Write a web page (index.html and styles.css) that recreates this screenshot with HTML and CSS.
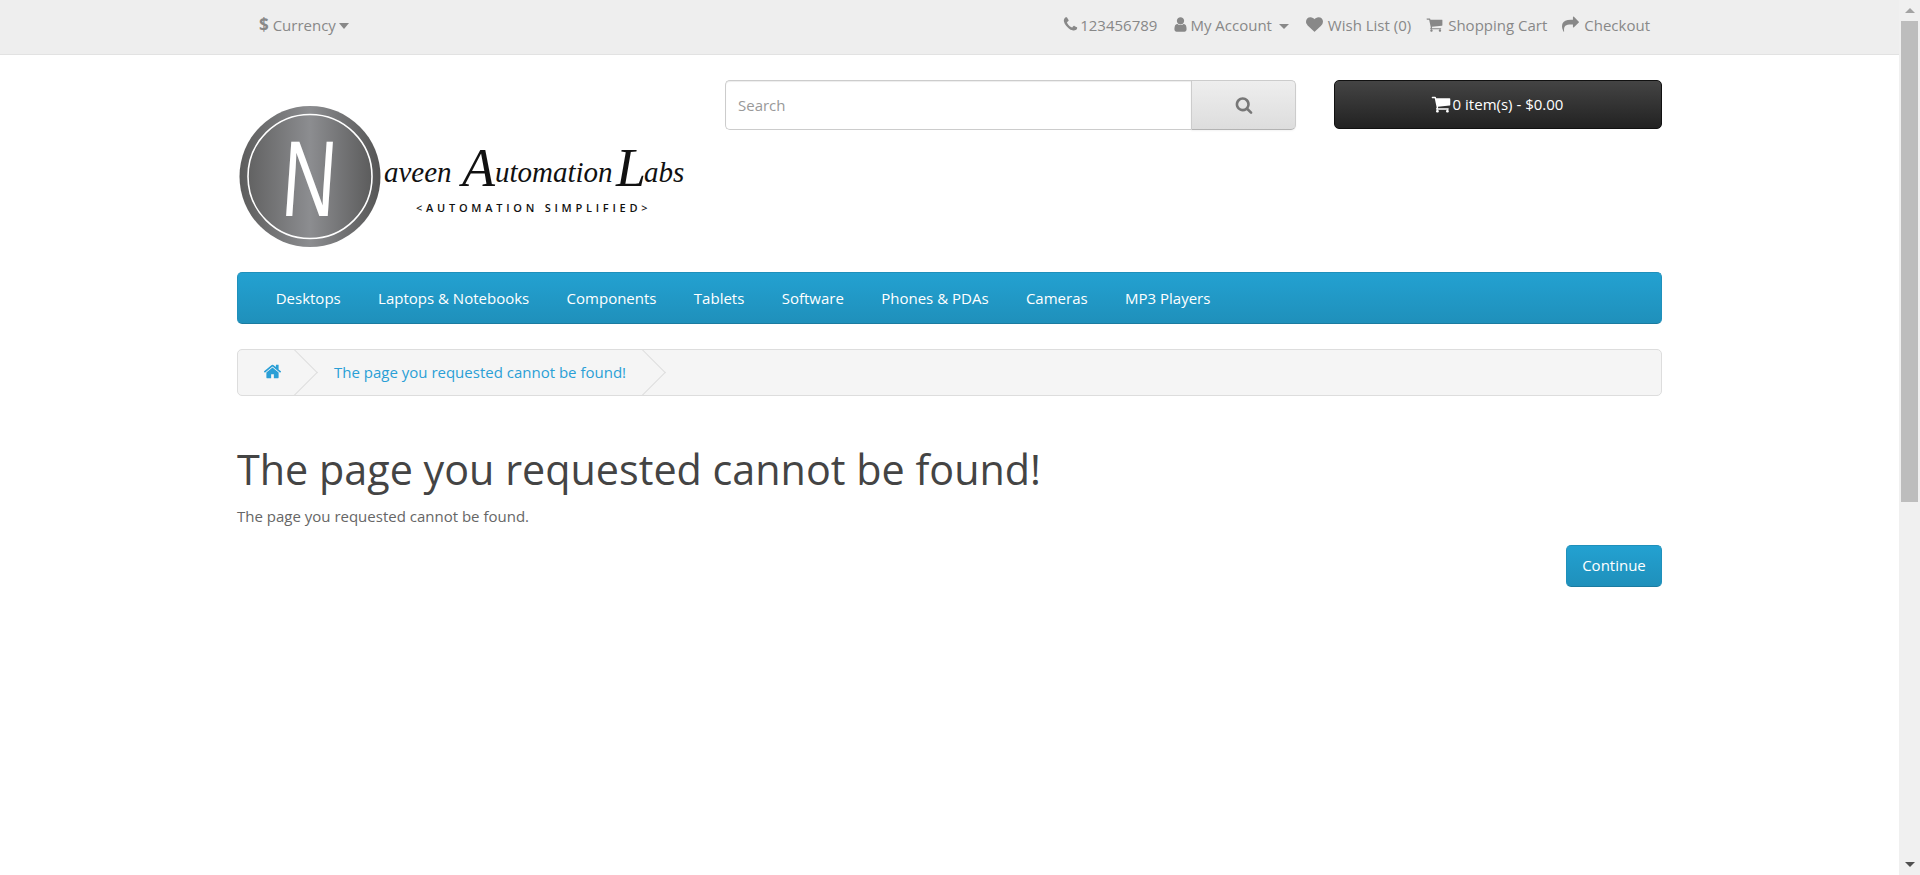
FILE: index.html
```html
<!DOCTYPE html>
<html lang="en">
<head>
    <meta charset="UTF-8">
    <title>The page you requested cannot be found!</title>
    <link rel="stylesheet" href="styles.css">
</head>
<body>
    <div class="page">
        <nav class="top-bar">
            <div class="container top-inner">
                <a class="top-link currency"><span class="dollar">$</span> Currency<span class="caret"></span></a>
                <div class="top-links">
                    <a class="top-link"><svg class="icon" viewBox="0 0 1792 1792"><path d="M1600 1240q0 27-10 70.5t-21 68.5q-21 50-122 106-94 51-186 51-27 0-53-3.5t-57.5-12.5-47-14.5-55.5-20.5-49-18q-98-35-175-83-127-79-264-216t-216-264q-48-77-83-175-3-9-18-49t-20.5-55.5-14.5-47-12.5-57.5-3.5-53q0-92 51-186 56-101 106-122 25-11 68.5-21t70.5-10q14 0 21 3 18 6 53 76 11 19 30 54t35 63.5 31 53.5q3 4 17.5 25t21.5 35.5 7 28.5q0 20-28.5 50t-62 55-62 53-28.5 46q0 9 5 22.5t8.5 20.5 14 24 11.5 19q76 137 174 235t235 174q2 1 19 11.5t24 14 20.5 8.5 22.5 5q18 0 46-28.5t53-62 55-62 50-28.5q14 0 28.5 7t35.5 21.5 25 17.5q25 15 53.5 31t63.5 35 54 30q70 35 76 53 3 7 3 21z"/></svg>123456789</a>
                    <a class="top-link"><svg class="icon" viewBox="0 0 1792 1792"><path d="M1536 1399q0 109-62.5 187t-150.5 78h-854q-88 0-150.5-78t-62.5-187q0-85 8.5-160.5t31.5-152 58.5-131 94-89 134.5-34.5q131 128 313 128t313-128q76 0 134.5 34.5t94 89 58.5 131 31.5 152 8.5 160.5zm-256-887q0 159-112.5 271.5t-271.5 112.5-271.5-112.5-112.5-271.5 112.5-271.5 271.5-112.5 271.5 112.5 112.5 271.5z"/></svg>My Account <span class="caret small"></span></a>
                    <a class="top-link"><svg class="icon wide" viewBox="0 0 1792 1792"><path d="M896 1664q-26 0-44-18l-624-602q-10-8-27.5-26t-55.5-65.5-68-97.5-53.5-121-23.5-138q0-220 127-344t351-124q62 0 126.5 21.5t120 58 95.5 68.5 76 68q36-36 76-68t95.5-68.5 120-58 126.5-21.5q224 0 351 124t127 344q0 221-229 450l-623 600q-18 18-44 18z"/></svg>Wish List (0)</a>
                    <a class="top-link"><svg class="icon wide" viewBox="0 0 1792 1792"><path d="M704 1536q0 52-38 90t-90 38-90-38-38-90 38-90 90-38 90 38 38 90zm896 0q0 52-38 90t-90 38-90-38-38-90 38-90 90-38 90 38 38 90zm128-1088v512q0 24-16.5 42.5t-40.5 21.5l-1044 122q13 60 13 70 0 16-24 64h920q26 0 45 19t19 45-19 45-45 19h-1024q-26 0-45-19t-19-45q0-11 8-31.5t16-36 21.5-40 15.5-29.5l-177-823h-204q-26 0-45-19t-19-45 19-45 45-19h256q16 0 28.5 6.5t19.5 15.5 13 24.5 8 26 5.5 29.5 4.5 26h1201q26 0 45 19t19 45z"/></svg>Shopping Cart</a>
                    <a class="top-link"><svg class="icon wide" viewBox="0 0 1792 1792"><path d="M1792 640q0 26-19 45l-512 512q-19 19-45 19t-45-19-19-45v-256h-224q-98 0-175.5 6t-154 21.5-133 42.5-105.5 69.5-80 101-48.5 138.5-17.5 181q0 55 5 123 0 6 2.5 23.5t2.5 26.5q0 15-8.5 25t-23.5 10q-16 0-28-17-7-9-13-22t-13.5-30-10.5-24q-127-285-127-451 0-199 53-333 162-403 875-403h224v-256q0-26 19-45t45-19 45 19l512 512q19 19 19 45z"/></svg>Checkout</a>
                </div>
            </div>
        </nav>

        <header class="container header-row">
            <svg class="logo" viewBox="0 0 460 167">
                <defs>
                    <linearGradient id="steel" x1="0" x2="1" y1="0" y2="0">
                        <stop offset="0" stop-color="#5c5c5c"/>
                        <stop offset="0.5" stop-color="#8c8d90"/>
                        <stop offset="1" stop-color="#555555"/>
                    </linearGradient>
                </defs>
                <circle cx="73" cy="96.5" r="70.5" fill="url(#steel)"/>
                <circle cx="73" cy="96.5" r="62" fill="none" stroke="#fff" stroke-width="1.6"/>
                <text class="logo-n" transform="translate(43 136) skewX(-4) scale(0.69 1)">N</text>
                <text class="logo-script" y="102"><tspan x="147">aveen</tspan><tspan class="logo-cap" x="225" y="106">A</tspan><tspan x="258" y="102">utomation</tspan><tspan class="logo-cap" x="379" y="106">L</tspan><tspan x="407" y="102">abs</tspan></text>
                <text class="logo-tag" x="179" y="132">&lt;AUTOMATION SIMPLIFIED&gt;</text>
            </svg>
            <div class="search">
                <input class="search-input" type="text" placeholder="Search">
                <button class="search-btn" type="button"><svg class="icon search-icon" viewBox="0 0 1792 1792"><path d="M1216 832q0-185-131.5-316.5t-316.5-131.5-316.5 131.5-131.5 316.5 131.5 316.5 316.5 131.5 316.5-131.5 131.5-316.5zm512 832q0 52-38 90t-90 38q-54 0-90-38l-343-342q-179 124-399 124-143 0-273.5-55.5t-225-150-150-225-55.5-273.5 55.5-273.5 150-225 225-150 273.5-55.5 273.5 55.5 225 150 150 225 55.5 273.5q0 220-124 399l343 343q37 37 37 90z"/></svg></button>
            </div>
            <button class="cart-btn" type="button"><svg class="icon cart-icon" viewBox="0 0 1792 1792"><path d="M704 1536q0 52-38 90t-90 38-90-38-38-90 38-90 90-38 90 38 38 90zm896 0q0 52-38 90t-90 38-90-38-38-90 38-90 90-38 90 38 38 90zm128-1088v512q0 24-16.5 42.5t-40.5 21.5l-1044 122q13 60 13 70 0 16-24 64h920q26 0 45 19t19 45-19 45-45 19h-1024q-26 0-45-19t-19-45q0-11 8-31.5t16-36 21.5-40 15.5-29.5l-177-823h-204q-26 0-45-19t-19-45 19-45 45-19h256q16 0 28.5 6.5t19.5 15.5 13 24.5 8 26 5.5 29.5 4.5 26h1201q26 0 45 19t19 45z"/></svg>0 item(s) - $0.00</button>
        </header>

        <div class="container">
            <ul class="menu">
                <li><a>Desktops</a></li>
                <li><a>Laptops &amp; Notebooks</a></li>
                <li><a>Components</a></li>
                <li><a>Tablets</a></li>
                <li><a>Software</a></li>
                <li><a>Phones &amp; PDAs</a></li>
                <li><a>Cameras</a></li>
                <li><a>MP3 Players</a></li>
            </ul>

            <ul class="breadcrumb">
                <li><a><svg class="icon home-icon" viewBox="0 0 1792 1792"><path d="M1472 992v480q0 26-19 45t-45 19h-384v-384h-256v384h-384q-26 0-45-19t-19-45v-480q0-1 .5-3t.5-3l575-474 575 474q1 2 1 6zm223-69l-62 74q-8 9-21 11h-3q-13 0-21-7l-692-577-692 577q-12 8-24 7-13-2-21-11l-62-74q-8-10-7-23.5t11-21.5l719-599q32-26 76-26t76 26l244 204v-195q0-14 9-23t23-9h192q14 0 23 9t9 23v408l219 182q10 8 11 21.5t-7 23.5z"/></svg></a></li>
                <li><a>The page you requested cannot be found!</a></li>
            </ul>

            <h1 class="title">The page you requested cannot be found!</h1>
            <p class="message">The page you requested cannot be found.</p>
            <div class="buttons">
                <a class="btn-primary">Continue</a>
            </div>
        </div>
    </div>

    <div class="scrollbar">
        <div class="scroll-arrow"><span class="arrow-up"></span></div>
        <div class="scroll-thumb"></div>
        <div class="scroll-space"></div>
        <div class="scroll-arrow"><span class="arrow-down"></span></div>
    </div>
</body>
</html>
```

FILE: styles.css
```css
body, html {
    margin: 0;
    padding: 0;
    height: 100%;
    overflow: hidden;
}

body {
    display: flex;
    font-family: "Open Sans", sans-serif;
    font-size: 15px;
    color: #666;
    background-color: #fff;
}

.page {
    flex: 1;
    min-width: 0;
}

.container {
    width: 1425px;
    margin: 0 auto;
}

.icon {
    width: 1em;
    height: 1em;
    fill: currentColor;
    vertical-align: -0.12em;
}

/* top bar */
.top-bar {
    height: 54px;
    background-color: #eee;
    border-bottom: 1px solid #e2e2e2;
}

.top-inner {
    box-sizing: border-box;
    height: 100%;
    padding-bottom: 5px;
    display: flex;
    justify-content: space-between;
    align-items: center;
}

.top-links {
    display: flex;
    gap: 15px;
    margin-right: 12px;
}

.top-link {
    color: #888;
    white-space: nowrap;
}

.top-link .icon {
    width: 17px;
    height: 17px;
    margin-right: 1px;
    vertical-align: -2px;
}

.top-link .icon.wide {
    margin-right: 5px;
}

.currency {
    margin-left: 22px;
}

.dollar {
    font-weight: 700;
    font-size: 17px;
}

.caret {
    display: inline-block;
    width: 0;
    height: 0;
    margin-left: 3px;
    border-left: 5.5px solid transparent;
    border-right: 5.5px solid transparent;
    border-top: 6px solid #888;
    vertical-align: 2px;
}

.caret.small {
    margin-left: 3px;
    margin-right: 2px;
    border-left-width: 5px;
    border-right-width: 5px;
    border-top-width: 5px;
}

/* header */
.header-row {
    display: grid;
    grid-template-columns: 488px 571px 328px;
    padding-top: 25px;
    padding-bottom: 25px;
    align-items: start;
}

.logo {
    display: block;
    width: 460px;
    height: 167px;
}

.logo-n {
    font-family: "Liberation Sans", sans-serif;
    font-size: 108px;
    fill: #fff;
}

.logo-script {
    font-family: "Liberation Serif", serif;
    font-style: italic;
    font-size: 29px;
    fill: #111;
}

.logo-cap {
    font-size: 54px;
}

.logo-tag {
    font-family: "Open Sans", sans-serif;
    font-size: 11px;
    font-weight: 600;
    letter-spacing: 3.75px;
    fill: #111;
}

.search {
    display: flex;
    height: 50px;
}

.search-input {
    flex: 1;
    min-width: 0;
    box-sizing: border-box;
    padding: 0 12px;
    font-family: inherit;
    font-size: 15px;
    color: #555;
    border: 1px solid #ccc;
    border-right: none;
    border-radius: 5px 0 0 5px;
    box-shadow: inset 0 1px 1px rgba(0, 0, 0, 0.075);
    outline: none;
}

.search-input::placeholder {
    color: #999;
}

.search-btn {
    width: 105px;
    padding: 0;
    border: 1px solid #ccc;
    border-bottom-color: #b3b3b3;
    border-radius: 0 5px 5px 0;
    background: linear-gradient(to bottom, #eee, #ddd);
    box-shadow: 0 1px 2px rgba(0, 0, 0, 0.05);
    color: #777;
}

.search-icon {
    width: 18px;
    height: 18px;
    vertical-align: -4px;
}

.cart-btn {
    margin-left: 38px;
    height: 49px;
    width: 328px;
    padding: 0 2px 2px 0;
    font-family: inherit;
    font-size: 15px;
    color: #fff;
    border: 1px solid #111;
    border-radius: 5px;
    background: linear-gradient(to bottom, #444, #222);
}

.cart-icon {
    width: 20px;
    height: 20px;
    margin-right: 2px;
    vertical-align: -4px;
}

/* menu */
.menu {
    display: flex;
    box-sizing: border-box;
    height: 52px;
    margin: 0;
    padding: 0 0 1px 19px;
    list-style: none;
    align-items: center;
    background: linear-gradient(to bottom, #23a1d1, #1f90bb);
    border: 1px solid #1f90bb;
    border-bottom: 1px solid #1b7ba0;
    border-radius: 5px;
}

.menu a {
    display: block;
    padding: 0 18.7px;
    color: #fff;
    font-size: 15px;
}

/* breadcrumb */
.breadcrumb {
    display: flex;
    box-sizing: border-box;
    height: 47px;
    margin: 25px 0 0;
    padding: 0 0 2px;
    list-style: none;
    overflow: hidden;
    background-color: #f5f5f5;
    border: 1px solid #ddd;
    border-radius: 5px;
}

.breadcrumb li {
    position: relative;
    display: flex;
    align-items: center;
    padding: 0 31px 0 25px;
    color: #23a1d1;
}

.breadcrumb li:first-child {
    padding: 0 27px 0 25px;
}

.breadcrumb li::after {
    content: "";
    position: absolute;
    top: 6px;
    right: -2px;
    width: 32px;
    height: 32px;
    border-top: 1px solid #ddd;
    border-right: 1px solid #ddd;
    transform: rotate(45deg);
    transform-origin: center;
}

.breadcrumb a {
    color: #2a9fd6;
}

.home-icon {
    width: 19px;
    height: 19px;
    vertical-align: -3px;
}

/* content */
.title {
    margin: 51px 0 0;
    font-size: 41.3px;
    font-weight: 400;
    line-height: 1.1;
    color: #444;
}

.message {
    margin: 14px 0 0;
    color: #666;
}

.buttons {
    display: flex;
    justify-content: flex-end;
    margin-top: 19px;
}

.btn-primary {
    box-sizing: border-box;
    width: 96px;
    height: 42px;
    line-height: 38px;
    text-align: center;
    color: #fff;
    font-size: 15px;
    background: linear-gradient(to bottom, #23a1d1, #1f90bb);
    border: 1px solid #1f90bb;
    border-bottom-color: #1b7ba0;
    border-radius: 5px;
}

/* fake window scrollbar */
.scrollbar {
    flex: 0 0 21px;
    display: flex;
    flex-direction: column;
    align-items: center;
    background-color: #f0f0f0;
}

.scroll-arrow {
    flex: 0 0 21px;
    width: 100%;
    display: flex;
    align-items: center;
    justify-content: center;
}

.arrow-up {
    border-left: 5px solid transparent;
    border-right: 5px solid transparent;
    border-bottom: 5px solid #a3a3a3;
}

.arrow-down {
    border-left: 5px solid transparent;
    border-right: 5px solid transparent;
    border-top: 5px solid #505050;
}

.scroll-thumb {
    flex: 0 0 481px;
    width: 17px;
    background-color: #bdbdbd;
}

.scroll-space {
    flex: 1;
}
```
